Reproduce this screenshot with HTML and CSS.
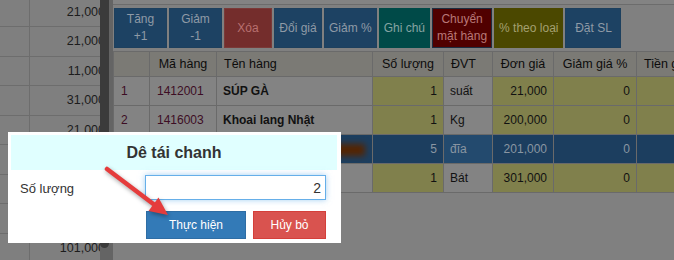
FILE: index.html
```html
<!DOCTYPE html>
<html lang="vi">

<head>
    <meta charset="UTF-8">
    <meta name="viewport" content="width=device-width, initial-scale=1.0">
    <title>Bán hàng</title>
    <link rel="stylesheet" href="styles.css">
</head>

<body>
    <!-- Màn hình bán hàng (đang bị làm tối bởi hộp thoại) -->
    <div class="page">
        <div class="side">
            <div class="side-row"><div class="side-idx"></div><div class="side-val">21,000</div></div>
            <div class="side-row"><div class="side-idx"></div><div class="side-val">21,000</div></div>
            <div class="side-row"><div class="side-idx"></div><div class="side-val">11,000</div></div>
            <div class="side-row"><div class="side-idx"></div><div class="side-val">31,000</div></div>
            <div class="side-row"><div class="side-idx"></div><div class="side-val">21,000</div></div>
            <div class="side-row"><div class="side-idx"></div><div class="side-val">41,000</div></div>
            <div class="side-row"><div class="side-idx"></div><div class="side-val">21,000</div></div>
            <div class="side-row"><div class="side-idx"></div><div class="side-val">51,000</div></div>
            <div class="side-row"><div class="side-idx"></div><div class="side-val">101,000</div></div>
        </div>

        <div class="scroll">
            <div class="thumb"></div>
        </div>

        <div class="main">
            <div class="topbar"></div>

            <div class="toolbar">
                <button class="tool tool-blue tool-wide">Tăng<br>+1</button>
                <button class="tool tool-blue tool-wide">Giảm<br>-1</button>
                <button class="tool tool-red">Xóa</button>
                <button class="tool tool-blue">Đổi giá</button>
                <button class="tool tool-blue">Giảm %</button>
                <button class="tool tool-teal">Ghi chú</button>
                <button class="tool tool-maroon">Chuyển<br>mặt hàng</button>
                <button class="tool tool-olive">% theo loại</button>
                <button class="tool tool-blue tool-sl">Đặt SL</button>
            </div>

            <table class="grid">
                <colgroup>
                    <col class="c-idx">
                    <col class="c-code">
                    <col class="c-name">
                    <col class="c-qty">
                    <col class="c-unit">
                    <col class="c-price">
                    <col class="c-disc">
                    <col class="c-total">
                </colgroup>
                <thead>
                    <tr>
                        <th></th>
                        <th>Mã hàng</th>
                        <th class="left">Tên hàng</th>
                        <th>Số lượng</th>
                        <th class="left">ĐVT</th>
                        <th>Đơn giá</th>
                        <th>Giảm giá %</th>
                        <th class="left">Tiền giảm</th>
                    </tr>
                </thead>
                <tbody>
                    <tr>
                        <td class="idx">1</td>
                        <td class="code">1412001</td>
                        <td class="name">SÚP GÀ</td>
                        <td class="num">1</td>
                        <td class="unit">suất</td>
                        <td class="num">21,000</td>
                        <td class="num">0</td>
                        <td class="num"></td>
                    </tr>
                    <tr>
                        <td class="idx">2</td>
                        <td class="code">1416003</td>
                        <td class="name">Khoai lang Nhật</td>
                        <td class="num">1</td>
                        <td class="unit">Kg</td>
                        <td class="num">200,000</td>
                        <td class="num">0</td>
                        <td class="num"></td>
                    </tr>
                    <tr class="selected">
                        <td class="idx">3</td>
                        <td class="code">1416005</td>
                        <td class="name"><span class="blur"></span></td>
                        <td class="num">5</td>
                        <td class="unit">đĩa</td>
                        <td class="num">201,000</td>
                        <td class="num">0</td>
                        <td class="num"></td>
                    </tr>
                    <tr>
                        <td class="idx">4</td>
                        <td class="code">1416007</td>
                        <td class="name">Lẩu dê</td>
                        <td class="num">1</td>
                        <td class="unit">Bát</td>
                        <td class="num">301,000</td>
                        <td class="num">0</td>
                        <td class="num"></td>
                    </tr>
                </tbody>
            </table>
        </div>
    </div>

    <!-- Hộp thoại sửa số lượng -->
    <div class="modal">
        <div class="modal-header">Dê tái chanh</div>
        <div class="modal-body">
            <div class="field">
                <label for="qty">Số lượng</label>
                <input type="text" id="qty" value="2">
            </div>
            <div class="actions">
                <button class="btn btn-primary">Thực hiện</button>
                <button class="btn btn-danger">Hủy bỏ</button>
            </div>
        </div>
    </div>

    <svg class="arrow" width="674" height="260" viewBox="0 0 674 260">
        <line x1="107" y1="169" x2="156" y2="206" stroke="#e53c3c" stroke-width="4.5" stroke-linecap="round" />
        <polygon points="168,215 148.5,211 158.5,197.5" fill="#e53c3c" />
    </svg>
</body>

</html>
```

FILE: styles.css
```css
/* màu nền đã tính sẵn lớp phủ tối 50% của hộp thoại */
body {
    margin: 0;
    font-family: "Liberation Sans", Arial, sans-serif;
    font-size: 12px;
    color: #1a1a1a;
    background-color: #808080;
    overflow: hidden;
}

.page {
    display: flex;
    height: 260px;
    overflow: hidden;
}

/* cột trái */
.side {
    width: 100px;
    flex-shrink: 0;
    overflow: hidden;
    margin-top: -2.5px;
}

.side-row {
    display: flex;
    width: 110px;
    height: 29.5px;
    box-sizing: border-box;
    border-bottom: 1px solid #6d6d6d;
    background-color: #7f7f7f;
}

.side-idx {
    width: 29px;
    border-right: 1px solid #6d6d6d;
}

.side-val {
    flex: 1;
    text-align: right;
    padding-right: 5px;
    line-height: 28px;
    font-size: 12.5px;
    color: #1c1c1c;
}

.scroll {
    width: 13px;
    flex-shrink: 0;
    background-color: #646464;
}

.thumb {
    width: 9px;
    height: 248px;
    background-color: #3b3b3b;
    border-radius: 0 0 5px 5px;
}

/* phần chính */
.main {
    flex: 1;
    min-width: 0;
    overflow: hidden;
}

.topbar {
    height: 4px;
    border-bottom: 1px solid #6c6c6c;
    background-color: #838383;
}

.toolbar {
    display: flex;
    gap: 2px;
    margin-top: 3px;
    padding-left: 1px;
}

.tool {
    height: 40px;
    min-width: 48px;
    padding: 0 4px;
    border: 1px solid transparent;
    color: #8f9aa6;
    font-family: "Liberation Sans", Arial, sans-serif;
    font-size: 12px;
    line-height: 17px;
    cursor: pointer;
}

.tool-wide {
    width: 53px;
}

.tool-sl {
    width: 56px;
}

.tool-blue {
    background-color: #1d4263;
    border-color: #1d405e;
}

.tool-red {
    background-color: #742d2c;
    border-color: #7a3a38;
    color: #b87070;
}

.tool-teal {
    background-color: #004a48;
    border-color: #004a48;
    color: #86a4a2;
}

.tool-maroon {
    background-color: #500000;
    border-color: #1d2d40;
    color: #b87878;
}

.tool-olive {
    background-color: #4b4800;
    border-color: #4b4800;
    color: #a4a070;
}

.grid {
    margin-top: 3px;
    border-collapse: collapse;
    table-layout: fixed;
    width: 623px;
}

.c-idx { width: 36px; }
.c-code { width: 67px; }
.c-name { width: 156px; }
.c-qty { width: 71px; }
.c-unit { width: 49px; }
.c-price { width: 61px; }
.c-disc { width: 83px; }
.c-total { width: 100px; }

.grid th,
.grid td {
    border: 1px solid #6a6a6a;
    white-space: nowrap;
    overflow: hidden;
}

.grid th {
    height: 24px;
    padding: 0 6px;
    background-color: #7b7a75;
    font-weight: normal;
    font-size: 12.5px;
    color: #0c0c0c;
    text-align: center;
}

.grid th.left {
    text-align: left;
    padding-left: 7px;
}

.grid td {
    height: 28px;
    padding: 0 6px;
    background-color: #838383;
    color: #111;
}

.grid td.idx,
.grid td.code {
    color: #3d0d24;
    padding-left: 7px;
}

.grid td.name {
    font-weight: bold;
}

.grid td.num {
    text-align: right;
    background-color: #80804c;
}

.grid tr.selected td {
    background-color: #1c3e5f;
    color: #8a96a2;
}

.grid tr.selected td.unit {
    background-color: #234a6e;
}

.blur {
    display: inline-block;
    width: 30px;
    height: 12px;
    margin-left: 112px;
    vertical-align: middle;
    background-color: #552400;
    filter: blur(3px);
}

/* hộp thoại */
.modal {
    position: absolute;
    left: 8px;
    top: 132px;
    width: 333px;
    height: 111px;
    box-sizing: border-box;
    padding: 3px 4px 0 3px;
    background-color: #fff;
}

.modal-header {
    height: 35px;
    line-height: 35px;
    text-align: center;
    background-color: #e0ffff;
    color: #333;
    font-size: 16px;
    font-weight: bold;
}

.modal-body {
    padding: 5px 11px 0 9px;
}

.field {
    display: flex;
    align-items: center;
}

.field label {
    flex: 1;
    font-size: 13px;
    color: #333;
    padding-top: 2px;
}

.field input {
    width: 181px;
    height: 25px;
    box-sizing: border-box;
    border: 1px solid #66afe9;
    box-shadow: 0 0 6px rgba(102, 175, 233, 0.6);
    outline: none;
    padding: 0 4px;
    text-align: right;
    font-family: "Liberation Sans", Arial, sans-serif;
    font-size: 14px;
    color: #333;
}

.actions {
    display: flex;
    justify-content: flex-end;
    gap: 7px;
    margin-top: 11px;
}

.btn {
    height: 28px;
    border: 1px solid transparent;
    color: #fff;
    font-family: "Liberation Sans", Arial, sans-serif;
    font-size: 12px;
    cursor: pointer;
}

.btn-primary {
    width: 100px;
    background-color: #337ab7;
    border-color: #2e6da4;
}

.btn-danger {
    width: 73px;
    background-color: #d9534f;
    border-color: #d43f3a;
}

.arrow {
    position: absolute;
    left: 0;
    top: 0;
    pointer-events: none;
    filter: drop-shadow(1px 2px 2px rgba(0, 0, 0, 0.35));
}
```
